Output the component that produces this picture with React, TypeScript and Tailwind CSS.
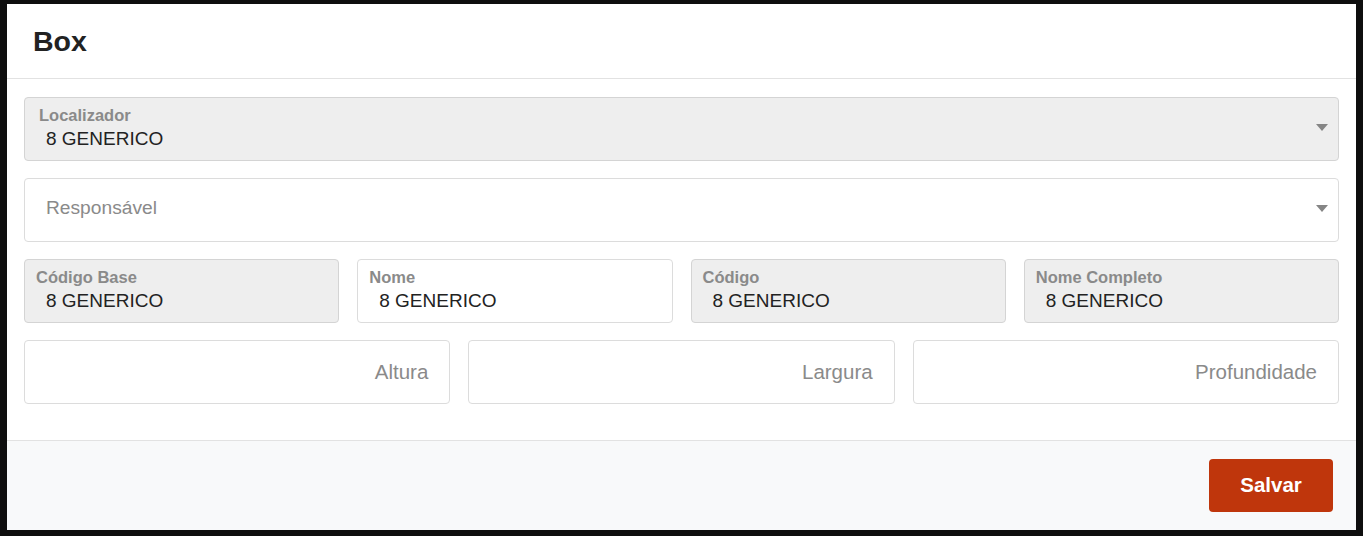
import React from 'react';

const font = { fontFamily: '"Liberation Sans", Arial, sans-serif' };

function Caret() {
  return (
    <svg width="12" height="7" viewBox="0 0 12 7" className="shrink-0 -mt-[3px]">
      <path d="M0 0 L12 0 L6 7 Z" fill="#858585" />
    </svg>
  );
}

interface FilledProps {
  label: string;
  value: string;
  labelPad?: string;
  select?: boolean;
  disabled?: boolean;
}

function FilledField({ label, value, labelPad = 'pl-[11px]', select = false, disabled = true }: FilledProps) {
  return (
    <div
      className={`h-[64px] rounded-[4px] border flex items-center pr-[10px] ${
        disabled ? 'bg-[#eeeeee] border-[#d4d4d4]' : 'bg-white border-[#dcdcdc]'
      }`}
    >
      <div className="flex-1 flex flex-col self-start pt-[7px]">
        <span className={`${labelPad} text-[16.5px] leading-[20px] font-bold text-[#8a8a8a]`}>{label}</span>
        <span className="pl-[21px] mt-[1.5px] text-[19px] leading-[24px] text-[#222222]">{value}</span>
      </div>
      {select && <Caret />}
    </div>
  );
}

function PlaceholderField({ text, right = false, select = false }: { text: string; right?: boolean; select?: boolean }) {
  return (
    <div className="h-[64px] rounded-[4px] border border-[#dcdcdc] bg-white flex items-center pr-[10px]">
      <span
        className={`flex-1 text-[#8a8a8a] ${
          right ? 'text-right pr-[11px] text-[20.5px]' : 'pl-[21px] text-[19.2px] -mt-[3px]'
        }`}
      >
        {text}
      </span>
      {select && <Caret />}
    </div>
  );
}

export default function App() {
  return (
    <div className="h-[536px] w-full bg-[#0e0e0e] pt-[4px] px-[7px] pb-[6px]" style={font}>
      <div className="h-[526px] bg-white flex flex-col">
        <div className="h-[75px] border-b border-[#e2e2e2] flex items-center px-[26px]">
          <h1 className="text-[28.5px] font-bold text-[#222222]">Box</h1>
        </div>

        <div className="flex-1 px-[17px] pt-[18px] flex flex-col gap-[17px]">
          <FilledField label="Localizador" value="8 GENERICO" labelPad="pl-[14px]" select />
          <PlaceholderField text="Responsável" select />
          <div className="grid grid-cols-4 gap-[18px]">
            <FilledField label="Código Base" value="8 GENERICO" />
            <FilledField label="Nome" value="8 GENERICO" disabled={false} />
            <FilledField label="Código" value="8 GENERICO" />
            <FilledField label="Nome Completo" value="8 GENERICO" />
          </div>
          <div className="grid grid-cols-3 gap-[18px]">
            <PlaceholderField text="Altura" right />
            <PlaceholderField text="Largura" right />
            <PlaceholderField text="Profundidade" right />
          </div>
        </div>

        <div className="h-[90px] border-t border-[#e2e2e2] bg-[#f8f9fa] flex justify-end items-start pt-[18px] pr-[23px]">
          <button className="w-[124px] h-[53px] rounded-[4px] bg-[#bf360c] text-white text-[20.5px] font-bold">
            Salvar
          </button>
        </div>
      </div>
    </div>
  );
}
